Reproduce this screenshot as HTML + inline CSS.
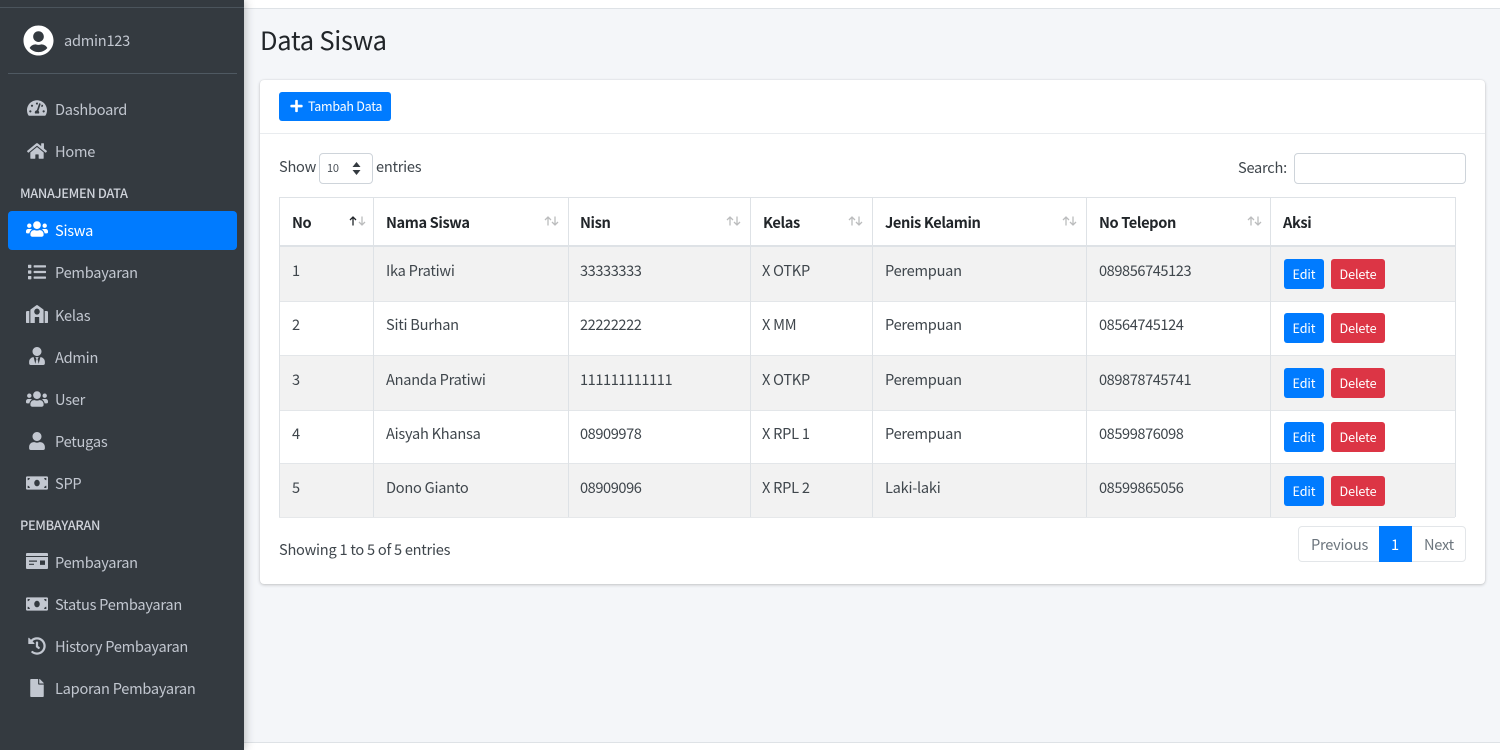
<!DOCTYPE html>
<html><head><meta charset="utf-8"><title>Data Siswa</title>
<style>
*{box-sizing:border-box}
html,body{margin:0;padding:0;width:1500px;height:750px;overflow:hidden;background:#f4f6f9}
body{position:relative;font-family:"Noto Sans CJK JP","Liberation Sans",sans-serif;color:#3f464c;font-size:14.6px;letter-spacing:-.25px;filter:blur(.3px)}
.a,.t,svg{position:absolute}
.t{white-space:nowrap;line-height:20px;height:20px}
.m{letter-spacing:-.42px}
.sb{position:absolute;left:0;top:0;width:244px;height:750px;background:#343a40;box-shadow:0 0 10px rgba(0,0,0,.3)}
.n{color:#c2c7d0;left:55px}
.h{color:#d0d4db;left:20px;font-size:12.8px;font-weight:500;letter-spacing:-.33px}
svg{fill:#c2c7d0}
.c{position:absolute;top:197px;height:320px;width:1px;background:#dee2e6}
.r{position:absolute;left:279px;width:1176px}
.o{background:#f2f2f2}
.b{font-weight:700;color:#212529;letter-spacing:-.38px}
.ar{top:216px;fill:none;stroke:#212529;stroke-width:1.3;opacity:.3}
.btn{position:absolute;height:30px;border-radius:3px;color:#fff;font-size:12.6px;line-height:30px;text-align:center;letter-spacing:-.1px}
.e{left:1284px;width:40px;background:#007bff}
.d{left:1331px;width:54px;background:#dc3545}
</style></head><body>
<div class="a" style="left:244px;top:0;width:1256px;height:9px;background:#fff;border-bottom:1px solid #dee2e6"></div>
<div class="a" style="left:244px;top:742px;width:1256px;height:8px;background:#fff;border-top:1px solid #dee2e6"></div>

<div class="sb">
<div class="a" style="left:0;top:7px;width:244px;height:1px;background:#4b545c"></div>
<svg style="left:23px;top:25px;fill:#fff" width="31" height="31" viewBox="0 0 496 512"><path d="M248 8C111 8 0 119 0 256s111 248 248 248 248-111 248-248S385 8 248 8zm0 96c48.6 0 88 39.4 88 88s-39.4 88-88 88-88-39.4-88-88 39.4-88 88-88zm0 344c-58.7 0-111.3-26.6-146.5-68.2 18.8-35.4 55.6-59.8 98.5-59.8 2.4 0 4.8.4 7.1 1.1 13 4.2 26.6 6.9 40.9 6.9 14.3 0 28-2.7 40.9-6.9 2.3-.7 4.7-1.1 7.1-1.1 42.9 0 79.7 24.4 98.5 59.8C359.3 421.4 306.7 448 248 448z"/></svg>
<span class="t n" style="left:64px;top:31px">admin123</span>
<div class="a" style="left:8px;top:73px;width:229px;height:1px;background:#4f5962"></div>

<svg style="left:27px;top:98px" width="20" height="20" viewBox="0 0 576 512"><path d="M288 32C128.94 32 0 160.94 0 320c0 52.8 14.25 102.26 39.06 144.8 5.61 9.62 16.3 15.2 27.44 15.2h443c11.14 0 21.83-5.58 27.44-15.2C561.75 422.26 576 372.8 576 320c0-159.06-128.94-288-288-288zm0 64c14.71 0 26.58 10.13 30.32 23.65-1.11 2.26-2.64 4.23-3.45 6.67l-9.22 27.67c-5.13 3.49-10.97 6.01-17.64 6.01-17.67 0-32-14.33-32-32S270.33 96 288 96zM96 384c-17.67 0-32-14.33-32-32s14.33-32 32-32 32 14.33 32 32-14.33 32-32 32zm48-160c-17.67 0-32-14.33-32-32s14.33-32 32-32 32 14.33 32 32-14.33 32-32 32zm246.77-72.41l-61.33 184C343.13 347.33 352 364.54 352 384c0 11.72-3.38 22.55-8.88 32H232.88c-5.5-9.45-8.88-20.28-8.88-32 0-33.94 26.5-61.43 59.9-63.59l61.34-184.01c4.17-12.56 17.73-19.45 30.36-15.17 12.57 4.19 19.35 17.79 15.17 30.36zm14.66 57.2l15.52-46.55c3.47-1.29 7.13-2.23 11.05-2.23 17.67 0 32 14.33 32 32s-14.33 32-32 32c-11.38-.01-20.89-6.28-26.57-15.22zM480 384c-17.67 0-32-14.33-32-32s14.33-32 32-32 32 14.33 32 32-14.33 32-32 32z"/></svg>
<span class="t n" style="top:100px">Dashboard</span>

<svg style="left:27px;top:142px" width="20" height="18" viewBox="0 0 576 512"><path d="M280.37 148.26L96 300.11V464a16 16 0 0 0 16 16l112.06-.29a16 16 0 0 0 15.92-16V368a16 16 0 0 1 16-16h64a16 16 0 0 1 16 16v95.64a16 16 0 0 0 16 16.05L464 480a16 16 0 0 0 16-16V300L295.67 148.26a12.19 12.19 0 0 0-15.3 0zM571.6 251.47L488 182.56V44.05a12 12 0 0 0-12-12h-56a12 12 0 0 0-12 12v72.61L318.47 43a48 48 0 0 0-61 0L4.34 251.47a12 12 0 0 0-1.6 16.9l25.5 31A12 12 0 0 0 45.15 301l235.22-193.74a12.19 12.19 0 0 1 15.3 0L530.9 301a12 12 0 0 0 16.9-1.6l25.5-31a12 12 0 0 0-1.7-16.93z"/></svg>
<span class="t n" style="top:142px">Home</span>

<span class="t h" style="top:183px">MANAJEMEN DATA</span>

<div class="a" style="left:8px;top:211px;width:229px;height:39px;background:#007bff;border-radius:4px"></div>
<svg style="left:26px;top:220px;fill:#fff" width="22" height="18" viewBox="0 0 640 512"><path d="M96 224c35.3 0 64-28.7 64-64s-28.7-64-64-64-64 28.7-64 64 28.7 64 64 64zm448 0c35.3 0 64-28.7 64-64s-28.7-64-64-64-64 28.7-64 64 28.7 64 64 64zm32 32h-64c-17.6 0-33.5 7.1-45.1 18.6 40.3 22.1 68.9 62 75.1 109.4h66c17.7 0 32-14.3 32-32v-32c0-35.3-28.7-64-64-64zm-256 0c61.9 0 112-50.1 112-112S381.9 32 320 32 208 82.1 208 144s50.1 112 112 112zm76.8 32h-8.3c-20.8 10-43.9 16-68.5 16s-47.6-6-68.5-16h-8.3C179.6 288 128 339.6 128 403.2V432c0 26.5 21.5 48 48 48h288c26.5 0 48-21.5 48-48v-28.8c0-63.6-51.6-115.2-115.2-115.2zm-223.7-13.4C161.5 263.1 145.6 256 128 256H64c-35.3 0-64 28.7-64 64v32c0 17.7 14.3 32 32 32h65.9c6.3-47.4 34.9-87.3 75.2-109.4z"/></svg>
<span class="t n" style="top:221px;color:#fff">Siswa</span>

<svg style="left:28px;top:263px" width="18" height="18" viewBox="0 0 512 512"><path d="M80 368H16a16 16 0 0 0-16 16v64a16 16 0 0 0 16 16h64a16 16 0 0 0 16-16v-64a16 16 0 0 0-16-16zm0-320H16A16 16 0 0 0 0 64v64a16 16 0 0 0 16 16h64a16 16 0 0 0 16-16V64a16 16 0 0 0-16-16zm0 160H16a16 16 0 0 0-16 16v64a16 16 0 0 0 16 16h64a16 16 0 0 0 16-16v-64a16 16 0 0 0-16-16zm416 176H176a16 16 0 0 0-16 16v32a16 16 0 0 0 16 16h320a16 16 0 0 0 16-16v-32a16 16 0 0 0-16-16zm0-320H176a16 16 0 0 0-16 16v32a16 16 0 0 0 16 16h320a16 16 0 0 0 16-16V80a16 16 0 0 0-16-16zm0 160H176a16 16 0 0 0-16 16v32a16 16 0 0 0 16 16h320a16 16 0 0 0 16-16v-32a16 16 0 0 0-16-16z"/></svg>
<span class="t n" style="top:263px">Pembayaran</span>

<svg style="left:26px;top:305px" width="22" height="18" viewBox="0 30 640 482" preserveAspectRatio="none"><path fill-rule="evenodd" d="M0 224v272c0 8.84 7.16 16 16 16h80V192H32c-17.67 0-32 14.33-32 32zM497.75 144.04l-160-106.67a32.02 32.02 0 0 0-35.5 0l-160 106.67A32 32 0 0 0 128 170.66V512h128V368c0-8.84 7.16-16 16-16h96c8.84 0 16 7.16 16 16v144h128V170.67c0-10.7-5.35-20.7-14.25-26.63zM320 288c-44.18 0-80-35.82-80-80s35.82-80 80-80 80 35.82 80 80-35.82 80-80 80zM608 192h-64v320h80c8.84 0 16-7.16 16-16V224c0-17.67-14.33-32-32-32z"/></svg>
<span class="t n" style="top:306px">Kelas</span>

<svg style="left:29px;top:347px" width="16" height="18" viewBox="0 0 448 512"><path d="M224 256c70.7 0 128-57.3 128-128S294.7 0 224 0 96 57.3 96 128s57.3 128 128 128zm95.8 32.6L272 480l-32-136 32-56h-96l32 56-32 136-47.8-191.4C56.9 292 0 350.3 0 422.4V464c0 26.5 21.5 48 48 48h352c26.5 0 48-21.5 48-48v-41.6c0-72.1-56.9-130.4-128.2-133.8z"/></svg>
<span class="t n" style="top:348px">Admin</span>

<svg style="left:26px;top:390px" width="22" height="18" viewBox="0 0 640 512"><path d="M96 224c35.3 0 64-28.7 64-64s-28.7-64-64-64-64 28.7-64 64 28.7 64 64 64zm448 0c35.3 0 64-28.7 64-64s-28.7-64-64-64-64 28.7-64 64 28.7 64 64 64zm32 32h-64c-17.6 0-33.5 7.1-45.1 18.6 40.3 22.1 68.9 62 75.1 109.4h66c17.7 0 32-14.3 32-32v-32c0-35.3-28.7-64-64-64zm-256 0c61.9 0 112-50.1 112-112S381.9 32 320 32 208 82.1 208 144s50.1 112 112 112zm76.8 32h-8.3c-20.8 10-43.9 16-68.5 16s-47.6-6-68.5-16h-8.3C179.6 288 128 339.6 128 403.2V432c0 26.5 21.5 48 48 48h288c26.5 0 48-21.5 48-48v-28.8c0-63.6-51.6-115.2-115.2-115.2zm-223.7-13.4C161.5 263.1 145.6 256 128 256H64c-35.3 0-64 28.7-64 64v32c0 17.7 14.3 32 32 32h65.9c6.3-47.4 34.9-87.3 75.2-109.4z"/></svg>
<span class="t n" style="top:390px">User</span>

<svg style="left:29px;top:432px" width="16" height="18" viewBox="0 0 448 512"><path d="M224 256c70.7 0 128-57.3 128-128S294.7 0 224 0 96 57.3 96 128s57.3 128 128 128zm89.6 32h-16.7c-22.2 10.2-46.9 16-72.9 16s-50.6-5.8-72.9-16h-16.7C60.2 288 0 348.2 0 422.4V464c0 26.5 21.5 48 48 48h352c26.5 0 48-21.5 48-48v-41.6c0-74.2-60.2-134.4-134.4-134.4z"/></svg>
<span class="t n" style="top:432px">Petugas</span>

<svg style="left:26px;top:474px" width="22" height="18" viewBox="0 0 640 512"><path d="M608 64H32C14.33 64 0 78.33 0 96v320c0 17.67 14.33 32 32 32h576c17.67 0 32-14.33 32-32V96c0-17.67-14.33-32-32-32zM48 400v-64c35.35 0 64 28.65 64 64H48zm0-224v-64h64c0 35.35-28.65 64-64 64zm272 176c-44.19 0-80-42.99-80-96 0-53.02 35.82-96 80-96s80 42.98 80 96c0 53.03-35.83 96-80 96zm272 48h-64c0-35.35 28.65-64 64-64v64zm0-224c-35.35 0-64-28.65-64-64h64v64z"/></svg>
<span class="t n" style="top:474px">SPP</span>

<span class="t h" style="top:515px">PEMBAYARAN</span>

<svg style="left:26px;top:552px" width="22" height="18" viewBox="0 0 22 18"><path fill-rule="evenodd" d="M1 1h20a1 1 0 0 1 1 1v14a1 1 0 0 1-1 1H1a1 1 0 0 1-1-1V2a1 1 0 0 1 1-1zM0 4v1h22V4zM3 8.500v1.200h8V8.500zm0 3.200v1.200h5v-1.200zM14 8.500v4.400h5V8.500z"/></svg>
<span class="t n" style="top:553px">Pembayaran</span>

<svg style="left:26px;top:595px" width="22" height="18" viewBox="0 0 640 512"><path d="M608 64H32C14.33 64 0 78.33 0 96v320c0 17.67 14.33 32 32 32h576c17.67 0 32-14.33 32-32V96c0-17.67-14.33-32-32-32zM48 400v-64c35.35 0 64 28.65 64 64H48zm0-224v-64h64c0 35.35-28.65 64-64 64zm272 176c-44.19 0-80-42.99-80-96 0-53.02 35.82-96 80-96s80 42.98 80 96c0 53.03-35.83 96-80 96zm272 48h-64c0-35.35 28.65-64 64-64v64zm0-224c-35.35 0-64-28.65-64-64h64v64z"/></svg>
<span class="t n" style="top:595px">Status Pembayaran</span>

<svg style="left:28px;top:637px" width="18" height="18" viewBox="0 0 512 512"><path d="M504 255.531c.253 136.64-111.18 248.372-247.82 248.468-59.015.042-113.223-20.53-155.822-54.911-11.077-8.94-11.905-25.541-1.839-35.607l11.267-11.267c8.609-8.609 22.353-9.551 31.891-1.984C173.062 425.135 212.781 440 256 440c101.705 0 184-82.311 184-184 0-101.705-82.311-184-184-184-48.814 0-93.149 18.969-126.068 49.932l50.754 50.754c10.08 10.08 2.941 27.314-11.313 27.314H24c-8.837 0-16-7.163-16-16V38.627c0-14.254 17.234-21.393 27.314-11.314l49.372 49.372C129.209 34.136 189.552 8 256 8c136.81 0 247.747 110.78 248 247.531zm-180.912 78.784l9.823-12.63c8.138-10.463 6.253-25.542-4.21-33.679L288 256.349V152c0-13.255-10.745-24-24-24h-16c-13.255 0-24 10.745-24 24v135.651l65.409 50.874c10.463 8.137 25.541 6.253 33.679-4.21z"/></svg>
<span class="t n" style="top:637px">History Pembayaran</span>

<svg style="left:30px;top:679px" width="14" height="18" viewBox="0 0 384 512"><path d="M224 136V0H24C10.7 0 0 10.7 0 24v464c0 13.3 10.7 24 24 24h336c13.3 0 24-10.7 24-24V160H248c-13.2 0-24-10.8-24-24zm160-14.1v6.1H256V0h6.1c6.4 0 12.5 2.500 17 7l97.900 98c4.500 4.500 7 10.600 7 16.900z"/></svg>
<span class="t n" style="top:679px">Laporan Pembayaran</span>
</div>

<span class="t" style="left:260px;top:23px;height:34px;line-height:34px;font-size:25.500px;letter-spacing:-.25px;color:#212529">Data Siswa</span>

<div class="a" style="left:259.500px;top:80px;width:1225.500px;height:504px;background:#fff;border-radius:4px;box-shadow:0 0 1px rgba(0,0,0,.13),0 1px 3px rgba(0,0,0,.2)"></div>
<div class="a" style="left:260px;top:133px;width:1225px;height:1px;background:#e9ecef"></div>

<div class="a" style="left:279px;top:92px;width:112px;height:29px;background:#007bff;border-radius:3px"></div>
<svg style="left:290px;top:99px;fill:#fff" width="13" height="14" viewBox="0 0 448 512"><path d="M416 208H272V64c0-17.67-14.33-32-32-32h-32c-17.67 0-32 14.33-32 32v144H32c-17.67 0-32 14.33-32 32v32c0 17.67 14.33 32 32 32h144v144c0 17.67 14.33 32 32 32h32c17.67 0 32-14.33 32-32V304h144c17.67 0 32-14.33 32-32v-32c0-17.67-14.33-32-32-32z"/></svg>
<span class="t" style="left:308px;top:96px;font-size:12.500px;letter-spacing:-.25px;color:#fff">Tambah Data</span>

<span class="t" style="left:279px;top:157px">Show</span>
<div class="a" style="left:319px;top:153px;width:54px;height:31px;border:1px solid #ced4da;border-radius:4px;background:#fff"></div>
<span class="t" style="left:327px;top:158px;font-size:11px;color:#495057">10</span>
<svg style="left:352px;top:162px;fill:#343a40" width="9" height="13" viewBox="0 0 9 13"><path d="M4.500 0L8.500 5H.5zM4.500 13L.5 8h8z"/></svg>
<span class="t" style="left:376px;top:157px">entries</span>
<span class="t" style="left:1238px;top:158px">Search:</span>
<div class="a" style="left:1294px;top:153px;width:172px;height:31px;border:1px solid #ced4da;border-radius:4px;background:#fff"></div>

<div class="a" style="left:279px;top:197px;width:1177px;height:1px;background:#dee2e6"></div>
<div class="r o" style="top:246px;height:55px"></div>
<div class="r o" style="top:355px;height:55px"></div>
<div class="r o" style="top:463px;height:54px"></div>
<div class="r" style="top:245px;height:2px;background:#dee2e6"></div>
<div class="r" style="top:301px;height:1px;background:#e3e6e9"></div>
<div class="r" style="top:355px;height:1px;background:#e3e6e9"></div>
<div class="r" style="top:410px;height:1px;background:#e3e6e9"></div>
<div class="r" style="top:463px;height:1px;background:#e3e6e9"></div>
<div class="r" style="top:517px;height:1px;background:#e6e8ea"></div>
<div class="c" style="left:279px"></div><div class="c" style="left:373px"></div><div class="c" style="left:568px"></div><div class="c" style="left:750px"></div><div class="c" style="left:872px"></div><div class="c" style="left:1086px"></div><div class="c" style="left:1270px"></div><div class="c" style="left:1455px"></div>

<span class="t b" style="left:292px;top:213px">No</span>
<span class="t b" style="left:386px;top:213px">Nama Siswa</span>
<span class="t b" style="left:580px;top:213px">Nisn</span>
<span class="t b" style="left:763px;top:213px">Kelas</span>
<span class="t b" style="left:885px;top:213px">Jenis Kelamin</span>
<span class="t b" style="left:1099px;top:213px">No Telepon</span>
<span class="t b" style="left:1283px;top:213px">Aksi</span>

<svg class="ar" style="left:349px;opacity:1" width="8" height="10" viewBox="0 0 8 10"><path d="M4 9.500V1M1 4l3-3 3 3"/></svg>
<svg class="ar" style="left:358px" width="8" height="10" viewBox="0 0 8 10"><path d="M4 .5V9M1 6l3 3 3-3"/></svg>
<svg class="ar" style="left:544px" width="15" height="10" viewBox="0 0 15 10"><path d="M4 9.500V1M1 4l3-3 3 3M11 .5V9M8 6l3 3 3-3"/></svg>
<svg class="ar" style="left:726px" width="15" height="10" viewBox="0 0 15 10"><path d="M4 9.500V1M1 4l3-3 3 3M11 .5V9M8 6l3 3 3-3"/></svg>
<svg class="ar" style="left:848px" width="15" height="10" viewBox="0 0 15 10"><path d="M4 9.500V1M1 4l3-3 3 3M11 .5V9M8 6l3 3 3-3"/></svg>
<svg class="ar" style="left:1062px" width="15" height="10" viewBox="0 0 15 10"><path d="M4 9.500V1M1 4l3-3 3 3M11 .5V9M8 6l3 3 3-3"/></svg>
<svg class="ar" style="left:1247px" width="15" height="10" viewBox="0 0 15 10"><path d="M4 9.500V1M1 4l3-3 3 3M11 .5V9M8 6l3 3 3-3"/></svg>

<span class="t" style="left:292px;top:261px">1</span><span class="t" style="left:386px;top:261px">Ika Pratiwi</span><span class="t m" style="left:580px;top:261px">33333333</span><span class="t" style="left:762px;top:261px">X OTKP</span><span class="t" style="left:885px;top:261px">Perempuan</span><span class="t m" style="left:1099px;top:261px">089856745123</span>
<span class="t" style="left:292px;top:315px">2</span><span class="t" style="left:386px;top:315px">Siti Burhan</span><span class="t m" style="left:580px;top:315px">22222222</span><span class="t" style="left:762px;top:315px">X MM</span><span class="t" style="left:885px;top:315px">Perempuan</span><span class="t m" style="left:1099px;top:315px">08564745124</span>
<span class="t" style="left:292px;top:370px">3</span><span class="t" style="left:386px;top:370px">Ananda Pratiwi</span><span class="t m" style="left:580px;top:370px">111111111111</span><span class="t" style="left:762px;top:370px">X OTKP</span><span class="t" style="left:885px;top:370px">Perempuan</span><span class="t m" style="left:1099px;top:370px">089878745741</span>
<span class="t" style="left:292px;top:424px">4</span><span class="t" style="left:386px;top:424px">Aisyah Khansa</span><span class="t m" style="left:580px;top:424px">08909978</span><span class="t" style="left:762px;top:424px">X RPL 1</span><span class="t" style="left:885px;top:424px">Perempuan</span><span class="t m" style="left:1099px;top:424px">08599876098</span>
<span class="t" style="left:292px;top:478px">5</span><span class="t" style="left:386px;top:478px">Dono Gianto</span><span class="t m" style="left:580px;top:478px">08909096</span><span class="t" style="left:762px;top:478px">X RPL 2</span><span class="t" style="left:885px;top:478px">Laki-laki</span><span class="t m" style="left:1099px;top:478px">08599865056</span>

<div class="btn e" style="top:259px">Edit</div><div class="btn d" style="top:259px">Delete</div>
<div class="btn e" style="top:313px">Edit</div><div class="btn d" style="top:313px">Delete</div>
<div class="btn e" style="top:368px">Edit</div><div class="btn d" style="top:368px">Delete</div>
<div class="btn e" style="top:422px">Edit</div><div class="btn d" style="top:422px">Delete</div>
<div class="btn e" style="top:476px">Edit</div><div class="btn d" style="top:476px">Delete</div>

<span class="t" style="left:279px;top:540px">Showing 1 to 5 of 5 entries</span>

<div class="a" style="left:1298px;top:526px;width:168px;height:36px;border:1px solid #e3e6e9;border-radius:4px;background:#fff"></div>
<div class="a" style="left:1379px;top:526px;width:33px;height:36px;background:#007bff"></div>
<span class="t" style="left:1311px;top:535px;color:#6c757d">Previous</span>
<span class="t" style="left:1391px;top:535px;color:#fff">1</span>
<span class="t" style="left:1424px;top:535px;color:#6c757d">Next</span>
</body></html>
